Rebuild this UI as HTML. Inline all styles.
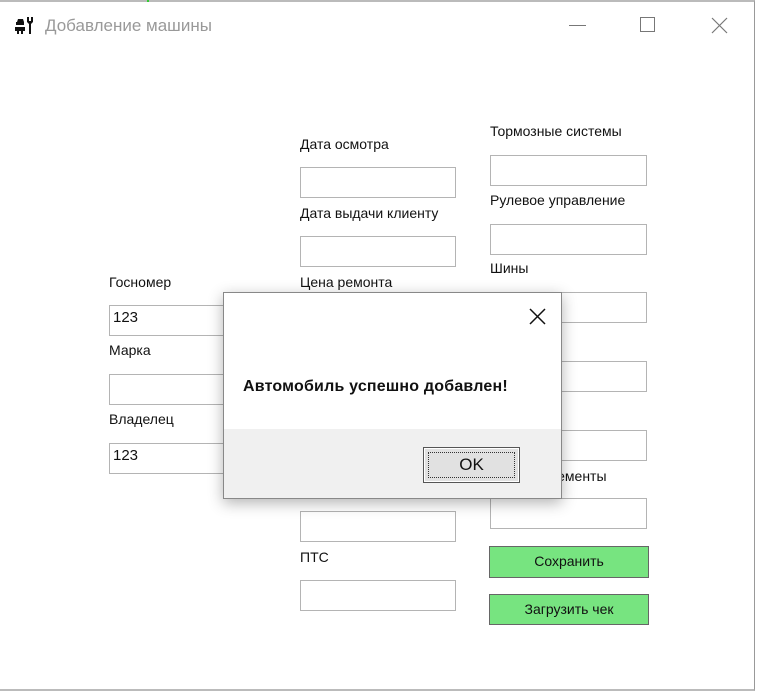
<!DOCTYPE html>
<html><head><meta charset="utf-8"><style>
body{margin:0;width:759px;height:695px;background:#fff;position:relative;overflow:hidden;font-family:"Comic Sans MS","Liberation Sans",sans-serif;}
.a{position:absolute}
.l{position:absolute;font-size:14px;color:#111;white-space:nowrap}
.i{position:absolute;border:1px solid #b4b4b4;background:#fff;box-sizing:border-box;height:31px;font-size:15px;padding:3px 0 0 3px;color:#111}
.btn{position:absolute;background:#77e480;border:1px solid #666;box-sizing:border-box;font-size:14px;text-align:center;line-height:29px;color:#111}
</style></head><body>
<div class="a" style="left:0;top:0;width:755px;height:691px;border-top:2px solid #bbb;border-right:1px solid #999;border-bottom:2px solid #bbb;box-sizing:border-box"></div>
<div class="a" style="left:147px;top:0;width:2px;height:2px;background:#3c3"></div>
<svg class="a" style="left:15px;top:17px" width="20" height="17" viewBox="0 0 20 17"><path d="M1 5h8v3H1zM0 10h10v4H0zM2 14h2v3H2zM6 14h2v3H6zM3 2h5l1 3H2z" fill="#111"/><path d="M12 0h2v4h2V0h2v5l-2 2v10h-2V7l-2-2z" fill="#111"/></svg>
<div class="l" style="left:45px;top:16px;font-family:'Liberation Sans',sans-serif;font-size:17px;color:#999">Добавление машины</div>
<div class="a" style="left:569px;top:25px;width:17px;height:1px;background:#777"></div>
<div class="a" style="left:640px;top:17px;width:15px;height:15px;border:1px solid #777;box-sizing:border-box"></div>
<svg class="a" style="left:711px;top:17px" width="17" height="17"><path d="M1 1L16 16M16 1L1 16" stroke="#777" stroke-width="1.2"/></svg>

<div class="l" style="left:109px;top:274px">Госномер</div>
<div class="i" style="left:109px;top:305px;width:122px">123</div>
<div class="l" style="left:109px;top:342px">Марка</div>
<div class="i" style="left:109px;top:374px;width:122px"></div>
<div class="l" style="left:109px;top:411px">Владелец</div>
<div class="i" style="left:109px;top:443px;width:122px">123</div>

<div class="l" style="left:300px;top:136px">Дата осмотра</div>
<div class="i" style="left:300px;top:167px;width:156px"></div>
<div class="l" style="left:300px;top:205px;width:156px;overflow:hidden">Дата выдачи клиенту</div>
<div class="i" style="left:300px;top:236px;width:156px"></div>
<div class="l" style="left:300px;top:274px">Цена ремонта</div>
<div class="i" style="left:300px;top:511px;width:156px"></div>
<div class="l" style="left:300px;top:549px">ПТС</div>
<div class="i" style="left:300px;top:580px;width:156px"></div>

<div class="l" style="left:490px;top:123px">Тормозные системы</div>
<div class="i" style="left:490px;top:155px;width:157px"></div>
<div class="l" style="left:490px;top:192px">Рулевое управление</div>
<div class="i" style="left:490px;top:224px;width:157px"></div>
<div class="l" style="left:490px;top:260px">Шины</div>
<div class="i" style="left:490px;top:292px;width:157px"></div>
<div class="i" style="left:490px;top:361px;width:157px"></div>
<div class="l" style="left:490px;top:398px">Двигатель</div>
<div class="i" style="left:490px;top:430px;width:157px"></div>
<div class="l" style="left:490px;top:468px">Прочие элементы</div>
<div class="i" style="left:490px;top:498px;width:157px"></div>
<div class="btn" style="left:489px;top:546px;width:160px;height:32px">Сохранить</div>
<div class="btn" style="left:489px;top:594px;width:160px;height:31px">Загрузить чек</div>

<div class="a" style="left:223px;top:292px;width:339px;height:207px;background:#fff;border:1px solid #888;box-sizing:border-box;box-shadow:0 4px 14px rgba(0,0,0,.3);font-family:'Liberation Sans',sans-serif">
<svg class="a" style="left:305px;top:15px" width="17" height="17"><path d="M1 1L16 16M16 1L1 16" stroke="#111" stroke-width="1.5"/></svg>
<div class="a" style="left:19px;top:85px;font-size:16px;font-weight:bold;color:#111;letter-spacing:0.2px">Автомобиль успешно добавлен!</div>
<div class="a" style="left:0;top:136px;width:337px;height:69px;background:#f0f0f0"></div>
<div class="a" style="left:199px;top:154px;width:97px;height:36px;border:1px solid #555;box-sizing:border-box;background:#e1e1e1;box-shadow:inset 0 0 0 1px #fff">
<div class="a" style="left:4px;top:4px;right:4px;bottom:4px;border:1px dotted #333;text-align:center;font-size:17px;line-height:24px;color:#111">OK</div></div>
</div>
</body></html>
